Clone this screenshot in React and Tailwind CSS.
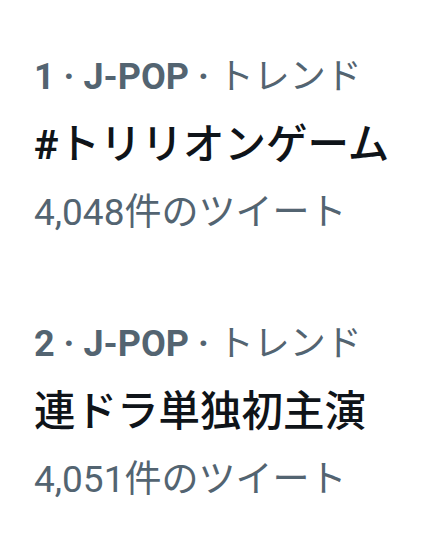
import React from "react";

const trends = [
  { rank: 1, category: "J-POP", name: "#トリリオンゲーム", count: "4,048" },
  { rank: 2, category: "J-POP", name: "連ドラ単独初主演", count: "4,051" },
];

export default function App() {
  return (
    <div className="min-h-screen bg-white px-[34px] pt-[45px] font-['Roboto','Noto_Sans_CJK_JP',sans-serif]">
      <div className="flex flex-col gap-[67px]">
        {trends.map((t) => (
          <div key={t.rank} className="flex flex-col">
            <div className="text-[36px] leading-[64px] text-[#536471] whitespace-nowrap">
              <span className="font-bold">
                {t.rank} · {t.category} ·{" "}
              </span>
              <span className="font-normal">トレンド</span>
            </div>
            <div className="text-[41.5px] leading-[72px] text-[#0f1419] whitespace-nowrap">
              {t.name.startsWith("#") ? (
                <>
                  <span className="font-bold">#</span>
                  <span className="font-medium">{t.name.slice(1)}</span>
                </>
              ) : (
                <span className="font-medium">{t.name}</span>
              )}
            </div>
            <div className="text-[37px] leading-[64px] text-[#536471] whitespace-nowrap">
              {t.count}件のツイート
            </div>
          </div>
        ))}
      </div>
    </div>
  );
}
